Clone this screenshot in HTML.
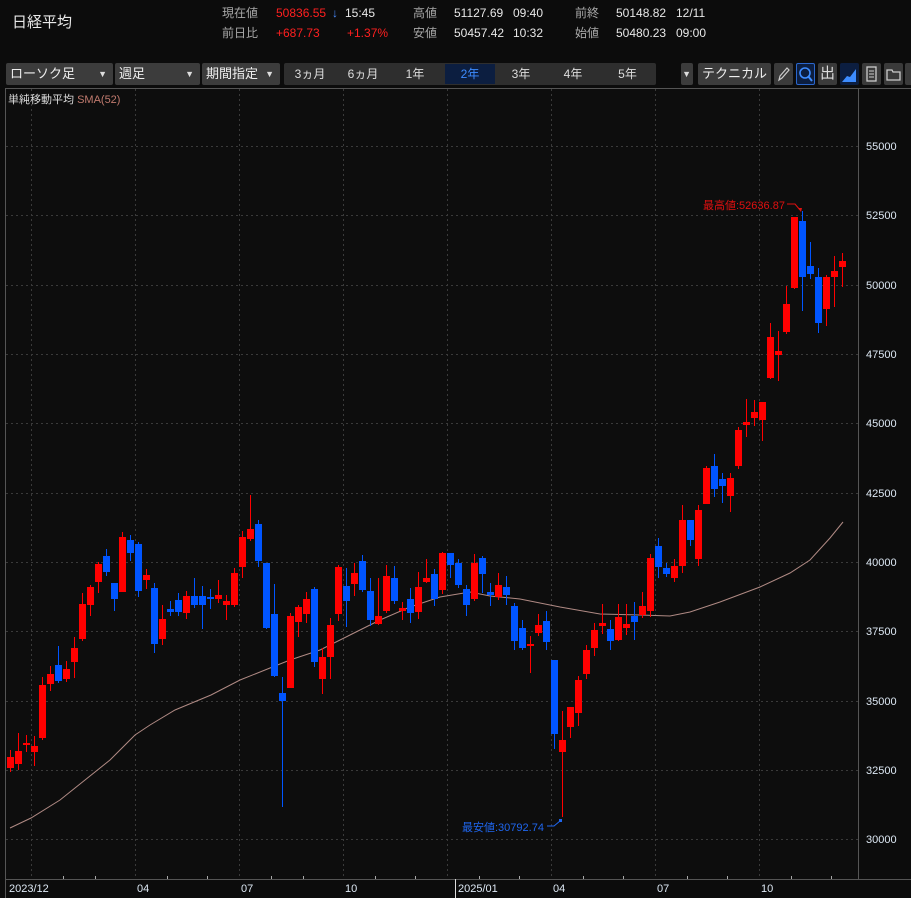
<!DOCTYPE html>
<html><head><meta charset="utf-8"><style>
*{margin:0;padding:0;box-sizing:border-box}
body{width:911px;height:898px;background:#0c0c0c;overflow:hidden;font-family:"Liberation Sans","Noto Sans CJK JP",sans-serif;color:#ddd;position:relative}
.a{position:absolute;white-space:nowrap;font-size:12px;line-height:14px}
.g{color:#a8a8a8}.r{color:#ff2020}.w{color:#e8e8e8}
.dd{position:absolute;top:63px;height:22px;background:#3c3c3c;border-radius:2px;color:#eee;font-size:13px;line-height:22px;padding-left:4px}
.dd i{position:absolute;right:6px;top:0;font-style:normal;font-size:9px;color:#ddd}
.pb{position:absolute;top:64px;height:20px;font-size:12px;line-height:20px;color:#ddd;text-align:center}
.ic{position:absolute;top:63px;width:19px;height:22px;background:#3a3a3a;border-radius:2px}
</style></head><body>
<div class="a w" style="left:12px;top:14px;font-size:15px;line-height:18px">日経平均</div>
<div class="a g" style="left:222px;top:6px">現在値</div>
<div class="a r" style="left:276px;top:6px">50836.55</div>
<div class="a" style="left:332px;top:6px;color:#4a8cff">↓</div>
<div class="a w" style="left:345px;top:6px">15:45</div>
<div class="a g" style="left:413px;top:6px">高値</div>
<div class="a w" style="left:454px;top:6px">51127.69</div>
<div class="a w" style="left:513px;top:6px">09:40</div>
<div class="a g" style="left:575px;top:6px">前終</div>
<div class="a w" style="left:616px;top:6px">50148.82</div>
<div class="a w" style="left:676px;top:6px">12/11</div>
<div class="a g" style="left:222px;top:26px">前日比</div>
<div class="a r" style="left:276px;top:26px">+687.73</div>
<div class="a r" style="left:347px;top:26px">+1.37%</div>
<div class="a g" style="left:413px;top:26px">安値</div>
<div class="a w" style="left:454px;top:26px">50457.42</div>
<div class="a w" style="left:513px;top:26px">10:32</div>
<div class="a g" style="left:575px;top:26px">始値</div>
<div class="a w" style="left:616px;top:26px">50480.23</div>
<div class="a w" style="left:676px;top:26px">09:00</div>

<div class="dd" style="left:6px;width:107px">ローソク足<i>▼</i></div>
<div class="dd" style="left:115px;width:85px">週足<i>▼</i></div>
<div class="dd" style="left:202px;width:78px">期間指定<i>▼</i></div>
<div style="position:absolute;left:284px;top:63px;width:372px;height:22px;background:#2e2e2e;border-radius:2px"></div>
<div class="pb" style="left:285px;width:50px">3ヵ月</div>
<div class="pb" style="left:338px;width:50px">6ヵ月</div>
<div class="pb" style="left:390px;width:50px">1年</div>
<div class="pb" style="left:445px;width:50px;background:#0c1e40;color:#3d8cff">2年</div>
<div class="pb" style="left:496px;width:50px">3年</div>
<div class="pb" style="left:548px;width:50px">4年</div>
<div class="pb" style="left:600px;width:55px">5年</div>
<div class="dd" style="left:681px;width:12px;padding:0"><i style="right:2px">▼</i></div>
<div class="dd" style="left:698px;width:73px;text-align:center;padding:0">テクニカル</div>
<div class="ic" style="left:774px"><svg width="19" height="22"><path d="M5 17l1-4 7-8 2 2-7 8z" fill="none" stroke="#ccc" stroke-width="1.2"/></svg></div>
<div class="ic" style="left:796px;background:#0c1e40;border:1px solid #2a66cc"><svg width="17" height="20"><circle cx="8" cy="9" r="5" fill="none" stroke="#3d8cff" stroke-width="1.6"/><path d="M11 12l4 5" stroke="#3d8cff" stroke-width="2"/></svg></div>
<div class="ic" style="left:818px;color:#ddd;font-size:15px;line-height:22px;text-align:center">出</div>
<div class="ic" style="left:840px;background:#0c1e40"><svg width="19" height="22"><path d="M2 19L7 13 10 14 16 6V19z" fill="#3d8cff"/></svg></div>
<div class="ic" style="left:862px"><svg width="19" height="22"><rect x="5" y="4" width="9" height="14" fill="none" stroke="#ccc" stroke-width="1.3"/><path d="M7 8h5M7 11h5M7 14h5" stroke="#ccc"/></svg></div>
<div class="ic" style="left:884px"><svg width="19" height="22"><path d="M3 7h5l1 2h7v8H3z" fill="none" stroke="#ccc" stroke-width="1.3"/></svg></div>
<div class="ic" style="left:905px"></div>

<svg width="911" height="898" style="position:absolute;left:0;top:0" xmlns="http://www.w3.org/2000/svg">
<rect x="6" y="89" width="852" height="790" fill="#0d0d0d"/>
<path d="M5.5 89V898M5 88.5H911M858.5 89V879M6 879.5H911" stroke="#555" stroke-width="1"/>
<g stroke="#3a3a3a" stroke-dasharray="2,3" stroke-width="1">
<path d="M6 146.5H858M6 215.5H858M6 285.5H858M6 354.5H858M6 423.5H858M6 493.5H858M6 562.5H858M6 631.5H858M6 701.5H858M6 770.5H858M6 839.5H858"/>
<path d="M31.5 89V879M135.5 89V879M239.5 89V879M343.5 89V879M447.5 89V879M551.5 89V879M655.5 89V879M759.5 89V879"/>
</g>
<path d="M455.5 879V898" stroke="#ddd"/>
<g stroke="#aaa"><path d="M63.5 876V879M95.5 876V879M167.5 876V879M207.5 876V879M271.5 876V879M303.5 876V879M375.5 876V879M415.5 876V879M479.5 876V879M519.5 876V879M583.5 876V879M623.5 876V879M687.5 876V879M727.5 876V879M791.5 876V879M831.5 876V879"/></g>
<g font-size="11" fill="#dde8f4" font-family="Liberation Sans,sans-serif">
<text x="866" y="150">55000</text><text x="866" y="219">52500</text><text x="866" y="289">50000</text><text x="866" y="358">47500</text><text x="866" y="427">45000</text><text x="866" y="497">42500</text><text x="866" y="566">40000</text><text x="866" y="635">37500</text><text x="866" y="705">35000</text><text x="866" y="774">32500</text><text x="866" y="843">30000</text>
<text x="9" y="892">2023/12</text><text x="137" y="892">04</text><text x="241" y="892">07</text><text x="345" y="892">10</text><text x="458" y="892">2025/01</text><text x="553" y="892">04</text><text x="657" y="892">07</text><text x="761" y="892">10</text>
</g>
<text x="8" y="103" font-size="11" fill="#ddd" font-family="Liberation Sans,Noto Sans CJK JP,sans-serif">単純移動平均 <tspan fill="#c07a6e">SMA(52)</tspan></text>
<polyline fill="none" stroke="#b08a84" stroke-width="1" points="10,828 31,818 60,800 85,780 110,760 135,735 150,725 175,710 211,695 240,680 270,668 290,660 320,650 350,635 380,620 410,607 440,597 470,592 490,596 520,599 560,607 600,614 640,615 670,616 690,612 720,602 760,587 790,573 810,560 830,538 843,522"/>
<path stroke="#ff0000" stroke-width="1" fill="none" d="M10.5 750V772M18.5 733V770M26.5 735V752M34.5 736V766M42.5 677V740M50.5 666V691M66.5 661V682M74.5 637V678M82.5 593V641M90.5 585V616M98.5 562V593M122.5 532V592M146.5 569V589M162.5 605V645M186.5 591V619M218.5 580V603M226.5 595V620M234.5 568V607M242.5 531V578M250.5 495V541M290.5 613V688M298.5 605V637M306.5 592V623M322.5 648V694M330.5 618V679M338.5 565V621M354.5 563V596M378.5 578V625M386.5 565V613M402.5 602V620M418.5 572V619M426.5 559V583M442.5 552V594M474.5 554V601M498.5 573V600M530.5 636V673M538.5 614V636M562.5 711V817M570.5 707V738M578.5 676V726M586.5 645V679M594.5 623V656M602.5 604V634M618.5 604V641M626.5 604V635M642.5 592V618M650.5 554V617M674.5 559V582M682.5 505V573M698.5 505V566M706.5 466V504M730.5 473V512M738.5 427V469M746.5 399V437M754.5 400V426M762.5 402V441M770.5 323V379M778.5 331V381M786.5 286V334M794.5 217V289M826.5 275V326M834.5 256V307M842.5 253V287"/>
<path fill="#ff0000" d="M7 757h7v11h-7zM15 751h7v13h-7zM23 743h7v2h-7zM31 746h7v6h-7zM39 685h7v53h-7zM47 674h7v10h-7zM63 669h7v10h-7zM71 648h7v14h-7zM79 604h7v35h-7zM87 587h7v18h-7zM95 564h7v18h-7zM119 537h7v55h-7zM143 575h7v5h-7zM159 619h7v20h-7zM183 596h7v17h-7zM215 595h7v4h-7zM223 601h7v4h-7zM231 573h7v32h-7zM239 537h7v30h-7zM247 529h7v10h-7zM287 616h7v72h-7zM295 607h7v15h-7zM303 599h7v15h-7zM319 657h7v22h-7zM327 625h7v32h-7zM335 567h7v47h-7zM351 573h7v11h-7zM375 616h7v8h-7zM383 576h7v35h-7zM399 608h7v3h-7zM415 587h7v25h-7zM423 578h7v4h-7zM439 553h7v37h-7zM471 563h7v36h-7zM495 585h7v12h-7zM527 644h7v2h-7zM535 625h7v8h-7zM559 740h7v12h-7zM567 707h7v20h-7zM575 680h7v33h-7zM583 650h7v24h-7zM591 630h7v18h-7zM599 623h7v3h-7zM615 617h7v23h-7zM623 624h7v4h-7zM639 606h7v9h-7zM647 558h7v53h-7zM671 566h7v12h-7zM679 520h7v46h-7zM695 510h7v49h-7zM703 468h7v36h-7zM727 478h7v18h-7zM735 430h7v36h-7zM743 422h7v3h-7zM751 412h7v6h-7zM759 402h7v18h-7zM767 337h7v41h-7zM775 351h7v4h-7zM783 304h7v28h-7zM791 217h7v71h-7zM823 277h7v32h-7zM831 271h7v6h-7zM839 261h7v6h-7z"/>
<path stroke="#0055ff" stroke-width="1" fill="none" d="M58.5 646V683M106.5 549V576M114.5 583V611M130.5 535V561M138.5 542V597M154.5 583V653M170.5 601V616M178.5 593V616M194.5 578V608M202.5 586V629M210.5 589V609M258.5 520V567M266.5 563V629M274.5 584V677M282.5 677V807M314.5 587V667M346.5 568V627M362.5 555V592M370.5 578V626M394.5 566V604M410.5 588V623M434.5 569V606M450.5 553V578M458.5 559V588M466.5 585V616M482.5 556V593M490.5 583V606M506.5 576V605M514.5 603V650M522.5 620V650M546.5 611V650M554.5 660V749M610.5 620V650M634.5 602V640M658.5 538V578M666.5 563V577M690.5 520V546M714.5 454V497M722.5 473V503M802.5 211V311M810.5 242V279M818.5 268V333"/>
<path fill="#0055ff" d="M55 665h7v16h-7zM103 556h7v16h-7zM111 583h7v16h-7zM127 540h7v13h-7zM135 544h7v47h-7zM151 588h7v56h-7zM167 609h7v3h-7zM175 600h7v12h-7zM191 596h7v9h-7zM199 596h7v9h-7zM207 597h7v2h-7zM255 524h7v37h-7zM263 563h7v65h-7zM271 614h7v62h-7zM279 693h7v8h-7zM311 589h7v73h-7zM343 586h7v15h-7zM359 561h7v29h-7zM367 591h7v29h-7zM391 578h7v23h-7zM407 599h7v14h-7zM431 574h7v25h-7zM447 553h7v12h-7zM455 563h7v22h-7zM463 589h7v16h-7zM479 558h7v16h-7zM487 592h7v3h-7zM503 587h7v8h-7zM511 606h7v35h-7zM519 628h7v20h-7zM543 621h7v21h-7zM551 660h7v74h-7zM607 629h7v12h-7zM631 616h7v6h-7zM655 546h7v21h-7zM663 568h7v6h-7zM687 520h7v20h-7zM711 466h7v23h-7zM719 479h7v7h-7zM799 221h7v56h-7zM807 266h7v8h-7zM815 277h7v46h-7z"/>
<text x="703" y="209" font-size="11" fill="#e01010" font-family="Liberation Sans,Noto Sans CJK JP,sans-serif">最高値:52636.87</text>
<path d="M787 204h8l5 6" fill="none" stroke="#e01010"/><path d="M798 208l3 4 1-4z" fill="#e01010"/>
<text x="462" y="831" font-size="11" fill="#1f66ee" font-family="Liberation Sans,Noto Sans CJK JP,sans-serif">最安値:30792.74</text>
<path d="M547 826h7l6-5" fill="none" stroke="#1f66ee"/><rect x="559" y="819" width="3" height="3" fill="#1f66ee"/>
</svg>
</body></html>
